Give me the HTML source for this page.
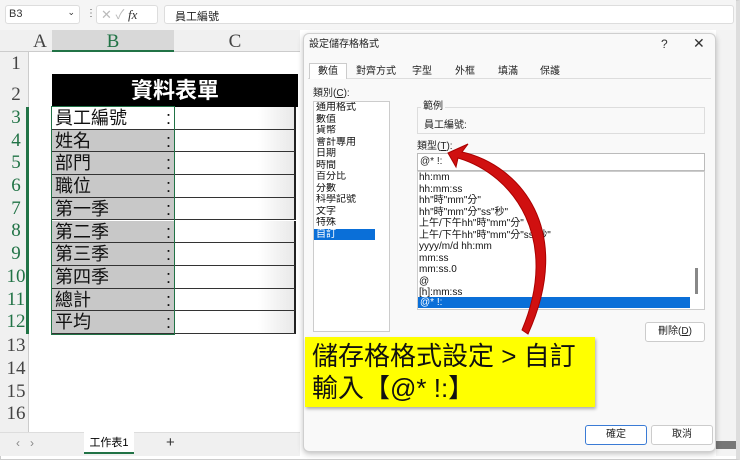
<!DOCTYPE html>
<html><head><meta charset="utf-8"><style>
*{margin:0;padding:0;box-sizing:border-box}
body{width:740px;height:460px;overflow:hidden;background:#fff;font-family:"Liberation Sans","Noto Sans CJK TC",sans-serif;position:relative}
.a{position:absolute}
.rh{position:absolute;left:4px;width:24px;text-align:center;font-family:"Liberation Serif","Noto Serif CJK SC",serif;font-size:19px;color:#444}
.cell{position:absolute;left:52px;width:122px;height:22.7px;background:#c8c8c8;border-bottom:1px solid #333;font-size:18px;line-height:22px;padding-left:3px;color:#111}
.cell span{position:absolute;right:3px;top:0}
.cc{position:absolute;left:174px;width:122px;height:22.7px;border-bottom:1px solid #333;border-right:2px solid #222;background:linear-gradient(90deg,#fff 70%,#e8e8e8)}
.d{font-size:10px;color:#222;line-height:12px}
.li{position:absolute;left:419px;font-size:10px;color:#111;height:11.5px;line-height:11.5px;white-space:nowrap}
.cat{font-size:10px;height:11.5px;line-height:11.5px;color:#111;padding-left:2px;overflow:hidden;white-space:nowrap}
</style></head><body>
<div class="a" style="left:0;top:0;width:740px;height:460px;border:1px solid #ccc;border-right:4px solid #ddd"></div>
<!-- formula bar -->
<div class="a" style="left:0;top:0;width:736px;height:30px;background:#f5f5f5"></div>
<div class="a" style="left:5px;top:5px;width:75px;height:19px;background:#fff;border:1px solid #ddd;border-radius:3px;font-size:11px;color:#333;padding:2px 3px">B3<span style="position:absolute;right:4px;top:1px;font-size:9px">⌄</span></div>
<div class="a" style="left:86px;top:8px;font-size:10px;color:#555">⋮</div>
<div class="a" style="left:96px;top:5px;width:62px;height:19px;background:#fff;border:1px solid #ddd;border-radius:3px;font-size:13px;color:#bbb;padding-left:4px;line-height:17px">✕ ✓ <i style="color:#333;font-family:'Liberation Serif',serif">fx</i></div>
<div class="a" style="left:164px;top:5px;width:570px;height:19px;background:#fff;border:1px solid #ddd;border-radius:3px;font-size:11px;color:#222;padding:2px 10px">員工編號</div>
<!-- headers -->
<div class="a" style="left:0;top:30px;width:300px;height:22px;background:#f0f0f0;border-bottom:1px solid #ccc"></div>
<div class="a" style="left:52px;top:30px;width:122px;height:22px;background:#d8d8d8;border-bottom:2px solid #217346"></div>
<div class="a" style="left:28px;top:31px;width:24px;text-align:center;font-family:'Liberation Serif',serif;font-size:19px;color:#444">A</div>
<div class="a" style="left:52px;top:31px;width:122px;text-align:center;font-family:'Liberation Serif',serif;font-size:19px;color:#217346">B</div>
<div class="a" style="left:174px;top:31px;width:122px;text-align:center;font-family:'Liberation Serif',serif;font-size:19px;color:#444">C</div>
<div class="a" style="left:0;top:52px;width:29px;height:380px;background:#f0f0f0;border-right:1px solid #ccc"></div>
<div class="a" style="left:26px;top:107px;width:3px;height:227px;background:#217346"></div>
<div class="rh" style="top:53px">1</div><div class="rh" style="top:84px">2</div>
<div class="rh" style="top:107px;color:#217346">3</div><div class="rh" style="top:130px;color:#217346">4</div><div class="rh" style="top:152px;color:#217346">5</div><div class="rh" style="top:175px;color:#217346">6</div><div class="rh" style="top:198px;color:#217346">7</div><div class="rh" style="top:220px;color:#217346">8</div><div class="rh" style="top:243px;color:#217346">9</div><div class="rh" style="top:266px;color:#217346">10</div><div class="rh" style="top:289px;color:#217346">11</div><div class="rh" style="top:311px;color:#217346">12</div>
<div class="rh" style="top:335px">13</div><div class="rh" style="top:358px">14</div><div class="rh" style="top:381px">15</div><div class="rh" style="top:403px">16</div>
<!-- table -->
<div class="a" style="left:52px;top:74px;width:246px;height:33px;background:#000;color:#fff;font-size:22px;font-weight:bold;text-align:center;line-height:33px">資料表單</div>
<div class="cell" style="top:107px;background:#fff">員工編號<span>:</span></div>
<div class="cell" style="top:129.7px">姓名<span>:</span></div>
<div class="cell" style="top:152.4px">部門<span>:</span></div>
<div class="cell" style="top:175.1px">職位<span>:</span></div>
<div class="cell" style="top:197.8px">第一季<span>:</span></div>
<div class="cell" style="top:220.5px">第二季<span>:</span></div>
<div class="cell" style="top:243.2px">第三季<span>:</span></div>
<div class="cell" style="top:265.9px">第四季<span>:</span></div>
<div class="cell" style="top:288.6px">總計<span>:</span></div>
<div class="cell" style="top:311.3px">平均<span>:</span></div>
<div class="cc" style="top:107px"></div><div class="cc" style="top:129.7px"></div><div class="cc" style="top:152.4px"></div><div class="cc" style="top:175.1px"></div><div class="cc" style="top:197.8px"></div><div class="cc" style="top:220.5px"></div><div class="cc" style="top:243.2px"></div><div class="cc" style="top:265.9px"></div><div class="cc" style="top:288.6px"></div><div class="cc" style="top:311.3px"></div>
<div class="a" style="left:51px;top:106px;width:124px;height:229px;border:1.5px solid #217346"></div>
<!-- bottom tabs -->
<div class="a" style="left:0;top:432px;width:300px;height:24px;background:#f0f0f0;border-top:1px solid #ddd"></div>
<div class="a" style="left:16px;top:436px;font-size:12px;color:#888">‹ &nbsp; ›</div>
<div class="a" style="left:84px;top:432px;width:50px;height:22px;background:#fff;font-size:11px;text-align:center;line-height:22px;border-bottom:2px solid #217346">工作表1</div>
<div class="a" style="left:166px;top:434px;font-size:15px;color:#333">+</div>
<div class="a" style="left:716px;top:30px;width:20px;height:426px;background:#f3f3f3"></div>
<div class="a" style="left:716px;top:441px;width:20px;height:8px;background:#777"></div>
<!-- dialog -->
<div class="a" style="left:303px;top:33px;width:413px;height:419px;background:#f9f9f9;border:1px solid #cfcfcf;border-radius:6px;box-shadow:0 2px 6px rgba(0,0,0,.25)"></div>
<div class="a d" style="left:309px;top:39px">設定儲存格格式</div>
<div class="a" style="left:661px;top:37px;font-size:12px;color:#333">?</div>
<div class="a" style="left:693px;top:35px;font-size:14px;color:#333">✕</div>
<div class="a" style="left:308px;top:78px;width:403px;height:1px;background:#ddd"></div>
<div class="a d" style="left:309px;top:63px;width:38px;height:16px;background:#fff;border:1px solid #ccc;border-bottom:none;text-align:center;line-height:15px">數值</div>
<div class="a d" style="left:356px;top:66px">對齊方式</div><div class="a d" style="left:412px;top:66px">字型</div><div class="a d" style="left:455px;top:66px">外框</div><div class="a d" style="left:498px;top:66px">填滿</div><div class="a d" style="left:540px;top:66px">保護</div>
<div class="a d" style="left:313px;top:88px">類別(<u>C</u>):</div>
<div class="a" style="left:313px;top:101px;width:77px;height:231px;background:#fff;border:1px solid #ccc">
<div class="cat">通用格式</div><div class="cat">數值</div><div class="cat">貨幣</div><div class="cat">會計專用</div><div class="cat">日期</div><div class="cat">時間</div><div class="cat">百分比</div><div class="cat">分數</div><div class="cat">科學記號</div><div class="cat">文字</div><div class="cat">特殊</div><div class="cat" style="background:#0a6fd8;color:#fff;width:81%">自訂</div></div>
<div class="a" style="left:417px;top:107px;width:288px;height:27px;border:1px solid #ddd"></div>
<div class="a d" style="left:421px;top:101px;background:#f9f9f9;padding:0 2px">範例</div>
<div class="a d" style="left:424px;top:120px">員工編號:</div>
<div class="a d" style="left:417px;top:141px">類型(<u>T</u>):</div>
<div class="a d" style="left:417px;top:153px;width:288px;height:18px;background:#fff;border:1px solid #bbb;padding:2px 2px">@* !:</div>
<div class="a" style="left:417px;top:171px;width:288px;height:139px;background:#fff;border:1px solid #ccc"></div>
<div class="li" style="top:172px">hh:mm</div><div class="li" style="top:183.5px">hh:mm:ss</div><div class="li" style="top:195px">hh"時"mm"分"</div><div class="li" style="top:206.5px">hh"時"mm"分"ss"秒"</div><div class="li" style="top:218px">上午/下午hh"時"mm"分"</div><div class="li" style="top:229.5px">上午/下午hh"時"mm"分"ss"秒"</div><div class="li" style="top:241px">yyyy/m/d hh:mm</div><div class="li" style="top:252.5px">mm:ss</div><div class="li" style="top:264px">mm:ss.0</div><div class="li" style="top:275.5px">@</div><div class="li" style="top:287px">[h]:mm:ss</div>
<div class="a" style="left:418px;top:297px;width:272px;height:11px;background:#0a6fd8;color:#fff;font-size:10px;line-height:11px;padding-left:2px">@* !:</div>
<div class="a" style="left:695px;top:268px;width:3px;height:26px;background:#888"></div>
<div class="a d" style="left:645px;top:322px;width:60px;height:20px;background:#fff;border:1px solid #ccc;border-radius:3px;text-align:center;line-height:18px">刪除(<u>D</u>)</div>
<div class="a d" style="left:585px;top:425px;width:62px;height:20px;background:#fff;border:1px solid #3a7bd5;border-radius:3px;text-align:center;line-height:18px">確定</div>
<div class="a d" style="left:651px;top:425px;width:62px;height:20px;background:#fff;border:1px solid #ccc;border-radius:3px;text-align:center;line-height:18px">取消</div>
<!-- arrow -->
<svg class="a" style="left:0;top:0" width="740" height="460">
<path d="M448 153 L468 144 L462 152 C520 165 575 230 528 334 L522 330 C560 240 515 175 458 158 L456 167 Z" fill="#d01010" stroke="#a00" stroke-width="1"/>
</svg>
<div class="a" style="left:305px;top:337px;width:290px;height:70px;background:#ffff00;box-shadow:1px 2px 3px rgba(0,0,0,.3);font-size:26px;line-height:32px;color:#111;padding:3px 7px">儲存格格式設定 &gt; 自訂<br>輸入【@* !:】</div>
</body></html>
